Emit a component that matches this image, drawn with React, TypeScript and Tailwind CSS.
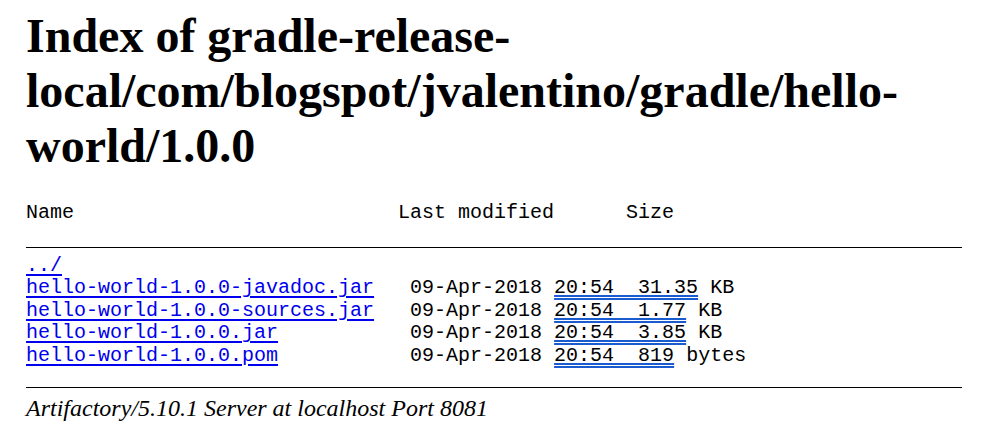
import React from "react";

type Entry = { name: string; time: string; size: string; unit: string };

const entries: Entry[] = [
  { name: "hello-world-1.0.0-javadoc.jar", time: "20:54", size: "31.35", unit: "KB" },
  { name: "hello-world-1.0.0-sources.jar", time: "20:54", size: "1.77", unit: "KB" },
  { name: "hello-world-1.0.0.jar", time: "20:54", size: "3.85", unit: "KB" },
  { name: "hello-world-1.0.0.pom", time: "20:54", size: "819", unit: "bytes" },
];

const mono = "font-['Liberation_Mono','Courier_New',monospace] text-[20px] leading-[22.6px] whitespace-pre text-black";
const link = "text-[#0000ee] underline decoration-[1.5px] underline-offset-[3px]";

export default function App() {
  return (
    <div className="bg-white min-h-screen pl-[26px] pr-[24px] pt-[8px] pb-4">
      <h1 className="font-['Liberation_Serif','Times_New_Roman',serif] font-bold text-[48px] leading-[55px] text-black">
        Index of gradle-release-local/com/blogspot/jvalentino/gradle/hello-world/1.0.0
      </h1>

      <pre className={`${mono} mt-[29px]`}>
        {"Name" + " ".repeat(27) + "Last modified" + " ".repeat(6) + "Size"}
      </pre>

      <hr className="mt-[22px] border-0 border-t border-black" />

      <pre className={`${mono} mt-[7px]`}>
        <div>
          <a href="#" className={link}>../</a>
        </div>
        {entries.map((e) => (
          <div key={e.name}>
            <a href="#" className={link}>{e.name}</a>
            {" ".repeat(32 - e.name.length) + "09-Apr-2018 "}
            <span className="underline decoration-double decoration-[#1b5bd0] decoration-[1.5px] underline-offset-[2px]">
              {e.time + "  " + e.size}
            </span>
            {" " + e.unit}
          </div>
        ))}
      </pre>

      <hr className="mt-[19px] border-0 border-t border-black" />

      <address className="mt-[7px] font-['Liberation_Serif','Times_New_Roman',serif] italic text-[24px] leading-[27.6px] text-black">
        Artifactory/5.10.1 Server at localhost Port 8081
      </address>
    </div>
  );
}
